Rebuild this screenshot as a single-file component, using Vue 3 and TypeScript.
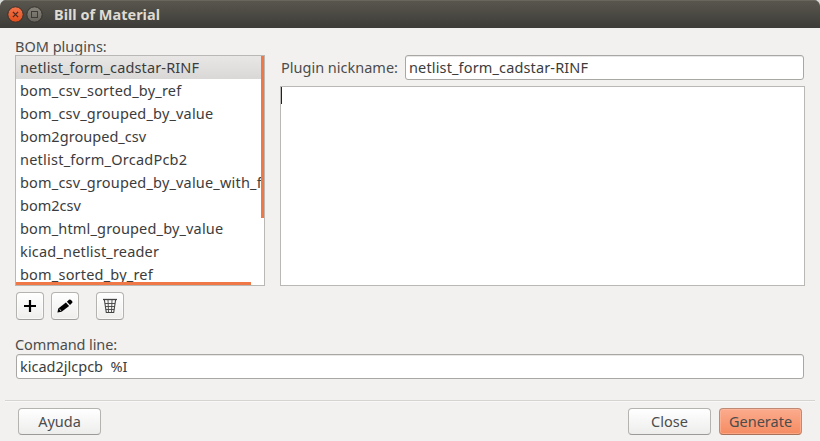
<script setup lang="ts">
import { ref } from 'vue'

interface Plugin {
  name: string
  spacing: number
}

const plugins: Plugin[] = [
  { name: 'netlist_form_cadstar-RINF', spacing: 0.14 },
  { name: 'bom_csv_sorted_by_ref', spacing: 0.2 },
  { name: 'bom_csv_grouped_by_value', spacing: 0.18 },
  { name: 'bom2grouped_csv', spacing: 0.04 },
  { name: 'netlist_form_OrcadPcb2', spacing: 0.23 },
  { name: 'bom_csv_grouped_by_value_with_fp', spacing: 0.18 },
  { name: 'bom2csv', spacing: 0 },
  { name: 'bom_html_grouped_by_value', spacing: 0.16 },
  { name: 'kicad_netlist_reader', spacing: 0.18 },
  { name: 'bom_sorted_by_ref', spacing: 0.2 },
]

const selected = ref(0)
const nickname = ref('netlist_form_cadstar-RINF')
const command = ref('kicad2jlcpcb  %I')
</script>

<template>
  <div class="window">
    <header class="titlebar">
      <svg class="wm" width="17" height="17" viewBox="0 0 17 17">
        <defs>
          <linearGradient id="closeFill" x1="0" y1="0" x2="0" y2="1">
            <stop offset="0" stop-color="#f4744c" />
            <stop offset="1" stop-color="#e04e1c" />
          </linearGradient>
        </defs>
        <circle cx="8.5" cy="8.5" r="7.7" fill="url(#closeFill)" stroke="#35322d" />
        <path d="M5.9 5.9l5.2 5.2M11.1 5.9l-5.2 5.2" stroke="#4d2a1c" stroke-width="1.3" />
      </svg>
      <svg class="wm" width="17" height="17" viewBox="0 0 17 17">
        <defs>
          <linearGradient id="maxFill" x1="0" y1="0" x2="0" y2="1">
            <stop offset="0" stop-color="#86847b" />
            <stop offset="1" stop-color="#66645c" />
          </linearGradient>
        </defs>
        <circle cx="8.5" cy="8.5" r="7.7" fill="url(#maxFill)" stroke="#35322d" />
        <rect x="5.5" y="5.5" width="6" height="6" fill="none" stroke="#3c3b37" />
      </svg>
      <h1 class="title">Bill of Material</h1>
    </header>

    <main class="body">
      <div class="columns">
        <section class="left">
          <div class="label bom">BOM plugins:</div>
          <div class="list">
            <ul>
              <li
                v-for="(p, i) in plugins"
                :key="p.name"
                :class="{ selected: i === selected }"
                :style="{ letterSpacing: p.spacing + 'px' }"
                @click="selected = i"
              >{{ p.name }}</li>
            </ul>
            <div class="vbar"></div>
            <div class="hbar"></div>
          </div>
        </section>
        <section class="right">
          <div class="nick">
            <label class="label nicklabel">Plugin nickname:</label>
            <div class="entry"><span class="nicktext">{{ nickname }}</span></div>
          </div>
          <div class="info"><span class="caret"></span></div>
        </section>
      </div>

      <div class="tools">
        <button class="tool" aria-label="Add">
          <svg width="16" height="16" viewBox="0 0 16 16">
            <path d="M8 2v12M2 8h12" stroke="#000" stroke-width="2.2" />
          </svg>
        </button>
        <button class="tool" aria-label="Edit">
          <svg width="16" height="16" viewBox="0 0 16 16">
            <path d="M0.4 14.6L1.3 10.6L8.9 4.6L12.1 8L4.6 13.8Z" fill="#000" />
            <path d="M9.9 3.8L12 1.8Q13 1 14 1.9L15.2 3.2Q16 4.2 15 5.1L13 7Z" fill="#000" />
            <path d="M2.6 11.4L4.2 12.8" stroke="#fff" stroke-width="0.9" />
          </svg>
        </button>
        <button class="tool trash" aria-label="Delete">
          <svg width="16" height="16" viewBox="0 0 16 16" fill="none" stroke="#444">
            <path d="M1 1.5h14" stroke-width="1.3" />
            <path d="M2.4 2l1.9 12.5h7.4L13.6 2" stroke-width="1.1" />
            <path d="M6 2l.5 12M10 2l-.5 12M3 5.5h10M3.4 8.5h9.2M3.8 11.5h8.4" stroke-width="0.9" />
          </svg>
        </button>
      </div>

      <div class="label cmdlabel">Command line:</div>
      <div class="entry cmd"><span class="cmdtext">{{ command }}</span></div>
    </main>

    <footer class="actions">
      <button class="btn"><span class="ayuda">Ayuda</span></button>
      <span class="grow"></span>
      <button class="btn"><span class="close">Close</span></button>
      <button class="btn primary"><span class="generate">Generate</span></button>
    </footer>
  </div>
</template>

<style>
body {
  margin: 0;
  background: #d9dbd8;
}
</style>

<style scoped>
.window {
  width: 820px;
  height: 441px;
  box-sizing: border-box;
  overflow: hidden;
  display: flex;
  flex-direction: column;
  background: #f2f1f0;
  border-radius: 6px 6px 0 0;
  font-family: 'Noto Sans', 'Open Sans', sans-serif;
  font-size: 14.5px;
  color: #3c3c3c;
}
.titlebar {
  height: 28px;
  flex: none;
  box-sizing: border-box;
  display: flex;
  align-items: center;
  padding: 1px 0 0 7px;
  gap: 2px;
  background: linear-gradient(#59574e, #3d3c38);
  box-shadow: inset 0 1px #68665d;
}
.wm {
  display: block;
}
.title {
  margin: 0 0 2px 9px;
  font-size: 14.5px;
  line-height: 20px;
  font-weight: 700;
  color: #dfdbd2;
  white-space: nowrap;
}
.body {
  flex: none;
  height: 372px;
  box-sizing: border-box;
  padding: 9px 15px 0;
  display: flex;
  flex-direction: column;
}
.columns {
  display: flex;
  gap: 15px;
  height: 249px;
}
.left {
  width: 250px;
}
.label {
  height: 18px;
  line-height: 16px;
  color: #4c4c4c;
  white-space: nowrap;
}
.bom {
  height: 17px;
  padding-top: 1px;
}
.list {
  position: relative;
  box-sizing: border-box;
  height: 231px;
  overflow: hidden;
  background: #fff;
  border: 1px solid #bab8b5;
}
.list ul {
  margin: 0;
  padding: 0;
  list-style: none;
}
.list li {
  height: 23px;
  line-height: 23px;
  padding-left: 4px;
  white-space: nowrap;
}
.list li.selected {
  background: linear-gradient(#e8e7e6, #d9d8d6);
}
.vbar {
  position: absolute;
  right: 0;
  top: 0;
  width: 3px;
  height: 162px;
  background: #f07746;
}
.hbar {
  position: absolute;
  left: 0;
  bottom: 0;
  width: 235px;
  height: 3px;
  background: #f07746;
}
.right {
  flex: 1;
  padding-top: 18px;
  display: flex;
  flex-direction: column;
  gap: 6px;
}
.nick {
  display: flex;
  align-items: center;
  height: 25px;
  padding-right: 1px;
}
.nicklabel {
  width: 125px;
  padding-left: 1px;
  box-sizing: border-box;
}
.entry {
  flex: 1;
  height: 25px;
  line-height: 23px;
  box-sizing: border-box;
  padding-left: 3px;
  background: #fff;
  border: 1px solid #a9a7a3;
  border-radius: 3px;
  box-shadow: inset 0 1px #e9e8e7;
  white-space: pre;
}
.nicktext {
  letter-spacing: 0.14px;
}
.info {
  flex: 1;
  background: #fff;
  border: 1px solid #bab8b5;
}
.caret {
  display: block;
  width: 1px;
  height: 17px;
  background: #222;
}
.tools {
  display: flex;
  gap: 7px;
  padding: 6px 0 0 1px;
}
.tool {
  width: 28px;
  height: 28px;
  padding: 0;
  display: grid;
  place-items: center;
  border: 1px solid #b5b3b0;
  border-bottom-color: #a09e9b;
  border-radius: 4px;
  background: linear-gradient(#fff, #efeeed);
  box-shadow: inset 0 0 0 1px #fff8;
}
.tool svg {
  display: block;
}
.trash {
  margin-left: 10px;
}
.cmdlabel {
  margin-top: 16px;
  letter-spacing: -0.1px;
}
.cmd {
  flex: none;
  margin: 0 1px;
}
.actions {
  flex: 1;
  margin: 0 5px;
  padding: 7px 13px 0;
  display: flex;
  align-items: flex-start;
  gap: 8px;
  border-top: 1px solid #d6d4d1;
  box-shadow: inset 0 1px #f9f8f8;
}
.grow {
  flex: 1;
}
.btn {
  width: 83px;
  height: 27px;
  padding: 0;
  font: inherit;
  line-height: 23px;
  color: #4c4c4c;
  border: 1px solid #b5b3b0;
  border-bottom-color: #9c9a97;
  border-radius: 4px;
  background: linear-gradient(#fff, #ededec);
}
.primary {
  border-color: #bf8a74;
  border-bottom-color: #a9705a;
  background: linear-gradient(#fbab8d, #f58c62);
  box-shadow: inset 0 0 0 1px #ffc0a680;
}
</style>
